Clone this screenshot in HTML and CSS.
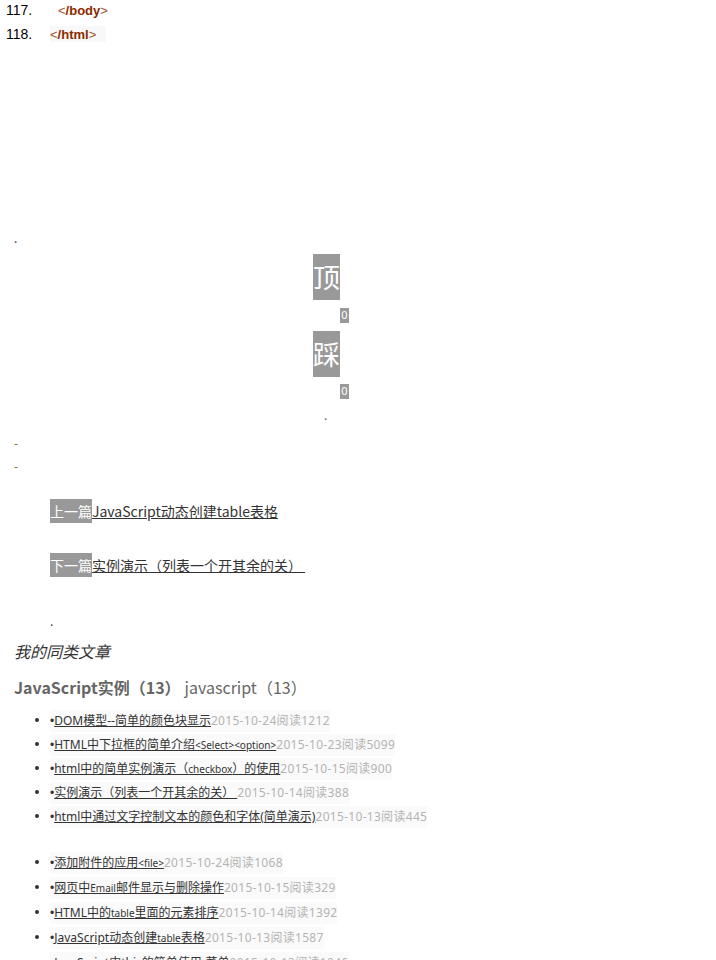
FILE: index.html
```html
<!DOCTYPE html>
<html lang="zh-CN">
<head>
<meta charset="utf-8">
<title>JavaScript实例</title>
<link rel="stylesheet" href="styles.css">
</head>
<body>
<div class="code">
  <div class="code-row"><span class="ln">117.</span><span class="src src-indent"><span class="br">&lt;</span><span class="tag">/body</span><span class="br">&gt;</span></span></div>
  <div class="code-row"><span class="ln">118.</span><span class="src src-hl"><span class="br">&lt;</span><span class="tag">/html</span><span class="br">&gt;</span></span></div>
</div>

<div class="dot dot-first">.</div>

<div class="vote">
  <div class="vbtn">顶</div>
  <div class="vcount">0</div>
  <div class="vbtn vbtn-2">踩</div>
  <div class="vcount vcount-2">0</div>
  <div class="vdot">.</div>
</div>

<div class="dash dash-1">-</div>
<div class="dash dash-2">-</div>

<div class="pn pn-prev"><span class="pn-label">上一篇</span><a class="pn-link" href="#">JavaScript动态创建table表格</a></div>
<div class="pn pn-next"><span class="pn-label">下一篇</span><a class="pn-link" href="#">实例演示（列表一个开其余的关）&nbsp;</a></div>

<div class="dot dot-pn">.</div>

<h3 class="same-title">我的同类文章</h3>
<div class="cats"><span class="cat cat-on">JavaScript实例（13）</span><span class="cat">javascript（13）</span></div>

<ul class="list list-1">
  <li><span class="item"><span class="bul">•</span><a href="#">DOM模型--简单的颜色块显示</a><span class="meta">2015-10-24阅读1212</span></span></li>
  <li><span class="item"><span class="bul">•</span><a href="#">HTML中下拉框的简单介绍<span class="sm">&lt;Select&gt;&lt;option&gt;</span></a><span class="meta">2015-10-23阅读5099</span></span></li>
  <li><span class="item"><span class="bul">•</span><a href="#">html中的简单实例演示（<span class="sm">checkbox</span>）的使用</a><span class="meta">2015-10-15阅读900</span></span></li>
  <li><span class="item"><span class="bul">•</span><a href="#">实例演示（列表一个开其余的关）&nbsp;</a><span class="meta">2015-10-14阅读388</span></span></li>
  <li><span class="item"><span class="bul">•</span><a href="#">html中通过文字控制文本的颜色和字体(简单演示)</a><span class="meta">2015-10-13阅读445</span></span></li>
</ul>
<ul class="list list-2">
  <li><span class="item"><span class="bul">•</span><a href="#">添加附件的应用<span class="sm">&lt;file&gt;</span></a><span class="meta">2015-10-24阅读1068</span></span></li>
  <li><span class="item"><span class="bul">•</span><a href="#">网页中<span class="sm">Email</span>邮件显示与删除操作</a><span class="meta">2015-10-15阅读329</span></span></li>
  <li><span class="item"><span class="bul">•</span><a href="#">HTML中的<span class="sm">table</span>里面的元素排序</a><span class="meta">2015-10-14阅读1392</span></span></li>
  <li><span class="item"><span class="bul">•</span><a href="#">JavaScript动态创建<span class="sm">table</span>表格</a><span class="meta">2015-10-13阅读1587</span></span></li>
  <li><span class="item"><span class="bul">•</span><a href="#">JavaScript中this的简单使用-菜单</a><span class="meta">2015-10-13阅读1046</span></span></li>
</ul>
</body>
</html>
```
FILE: styles.css
```css
html, body {
  margin: 0;
  padding: 0;
  background: #ffffff;
}
body {
  font-family: "Noto Sans CJK SC", "Noto Sans", sans-serif;
  color: #333333;
  width: 716px;
  overflow: hidden;
}
.code {
  display: flex;
  flex-direction: column;
  gap: 4px;
  padding-left: 6px;
}
.code-row {
  display: flex;
  align-items: center;
  height: 20px;
  font-family: "Liberation Sans", Arial, sans-serif;
}
.ln {
  font-size: 14px;
  color: #000;
  width: 44px;
}
.src {
  font-size: 13px;
  font-weight: bold;
  line-height: 13px;
}
.src-indent {
  margin-left: 8px;
}
.src-hl {
  background: #f8f8f8;
  padding: 2px 10px 1px 0;
}
.br { color: #a0522d; font-weight: normal; }
.tag { color: #8b2a00; }

.dot {
  font-size: 12px;
  line-height: 12px;
  height: 12px;
  color: #335;
}
.dot-first {
  margin: 188px 0 0 14px;
}
.vote {
  display: flex;
  flex-direction: column;
  align-items: flex-start;
  margin-top: 10px;
  padding-left: 313px;
}
.vbtn {
  background: #999999;
  color: #ffffff;
  font-size: 27px;
  line-height: 46px;
  height: 46px;
  width: 27px;
  overflow: hidden;
}
.vbtn-2 { margin-top: 8px; }
.vcount {
  background: #999999;
  color: #ffffff;
  font-family: "Noto Sans", sans-serif;
  font-size: 11px;
  line-height: 14px;
  height: 15px;
  width: 9px;
  text-align: center;
  margin: 8px 0 0 27px;
}
.vcount-2 { margin-top: 7px; }
.vdot {
  color: #3a6ea5;
  font-size: 12px;
  line-height: 12px;
  height: 12px;
  margin: 10px 0 0 11px;
}
.dash {
  color: #8a5a1a;
  font-size: 12px;
  line-height: 12px;
  height: 12px;
  margin-left: 14px;
}
.dash-1 { margin-top: 16px; }
.dash-2 { margin-top: 11px; }

.pn {
  display: flex;
  align-items: center;
  height: 24px;
  margin-left: 50px;
  font-size: 14px;
}
.pn-prev { margin-top: 27px; }
.pn-next { margin-top: 30px; }
.pn-label {
  background: #999999;
  color: #ffffff;
  line-height: 24px;
  height: 24px;
}
.pn-link {
  color: #333333;
  text-decoration: underline;
}
.dot-pn {
  margin: 38px 0 0 50px;
}
.same-title {
  margin: 13px 0 0 14px;
  font-size: 16px;
  line-height: 22px;
  font-weight: normal;
  font-style: italic;
  color: #333333;
}
.cats {
  margin: 13px 0 0 14px;
  display: flex;
  gap: 4px;
  font-size: 16px;
  line-height: 24px;
  color: #666666;
}
.cat-on { font-weight: bold; }

.list {
  margin: 9px 0 0 14px;
  padding-left: 36px;
  font-size: 12px;
  font-family: "Noto Sans", "Noto Sans CJK SC", sans-serif;
}
.list li {
  line-height: 24px;
  height: 24px;
}
.list-2 { margin-top: 21px; }
.list-2 li { height: 25px; line-height: 25px; }
.item {
  display: inline-block;
  background: #fafafa;
  line-height: 21px;
  vertical-align: middle;
}
.bul {
  font-family: "Liberation Sans", Arial, sans-serif;
  font-size: 12px;
}
.item a {
  color: #333333;
  text-decoration: underline;
}
.sm { font-size: 10px; }
.meta { color: #b4b4b4; letter-spacing: 0.3px; }
```
